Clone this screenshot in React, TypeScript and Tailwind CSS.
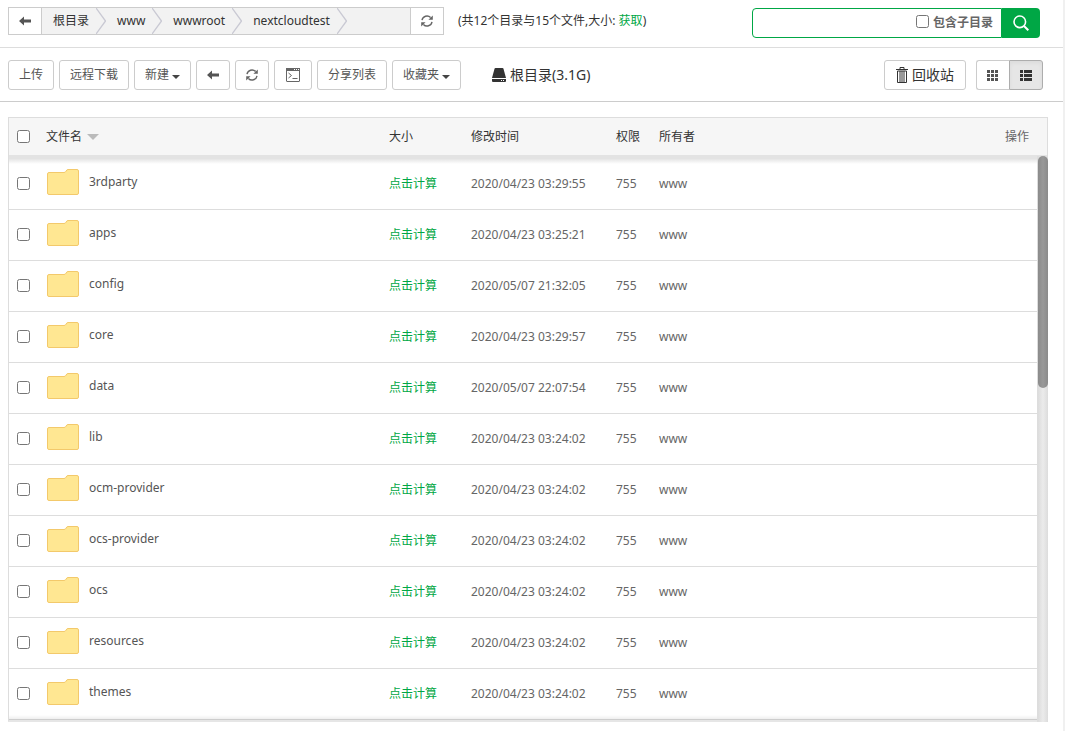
import { useState } from "react";
import type { ReactNode } from "react";

interface IFolder {
    name: string;
    modified: string;
}

const crumbs = ["根目录", "www", "wwwroot", "nextcloudtest"];

const folders: IFolder[] = [
    { name: "3rdparty", modified: "2020/04/23 03:29:55" },
    { name: "apps", modified: "2020/04/23 03:25:21" },
    { name: "config", modified: "2020/05/07 21:32:05" },
    { name: "core", modified: "2020/04/23 03:29:57" },
    { name: "data", modified: "2020/05/07 22:07:54" },
    { name: "lib", modified: "2020/04/23 03:24:02" },
    { name: "ocm-provider", modified: "2020/04/23 03:24:02" },
    { name: "ocs-provider", modified: "2020/04/23 03:24:02" },
    { name: "ocs", modified: "2020/04/23 03:24:02" },
    { name: "resources", modified: "2020/04/23 03:24:02" },
    { name: "themes", modified: "2020/04/23 03:24:02" },
];

const ArrowLeftIcon = () => (
    <svg width="12" height="10" viewBox="0 0 12 10" fill="#555" aria-hidden="true">
        <path d="M0 5 5 .5V3.5H12V6.5H5V9.5Z" />
    </svg>
);

const RefreshIcon = () => (
    <svg width="12" height="12" viewBox="0 0 12 12" fill="none" stroke="#666" strokeWidth="1.4" aria-hidden="true">
        <path d="M1 5.2A5 5 0 0 1 9.6 2.6M11 6.8A5 5 0 0 1 2.4 9.4" />
        <path d="M11.8 .4V4.8H7.4ZM.2 11.6V7.2H4.6Z" fill="#666" stroke="none" />
    </svg>
);

const ConsoleIcon = () => (
    <svg width="14" height="14" viewBox="0 0 14 14" fill="none" stroke="#666" aria-hidden="true">
        <rect x=".5" y=".5" width="13" height="13" rx=".5" />
        <path d="M0 1.5H14" strokeWidth="3" />
        <path d="M8 1.5H9M10 1.5H11M12 1.5H13" stroke="#fff" />
        <path d="M2.5 5 5.5 7.5 2.5 10M6.5 10.5H11.5" />
    </svg>
);

const DiskIcon = () => (
    <svg width="14" height="14" viewBox="0 0 14 14" fill="#333" aria-hidden="true">
        <path d="M2.6 .6Q2.8 0 3.5 0H10.5Q11.2 0 11.4 .6L14 10H0Z" />
        <path d="M0 11H14V13Q14 14 13 14H1Q0 14 0 13Z" />
        <path d="M9 12.5H10M11 12.5H12" stroke="#fff" />
    </svg>
);

const SearchIcon = () => (
    <svg width="16" height="16" viewBox="0 0 16 16" fill="none" stroke="#fff" strokeWidth="1.6" aria-hidden="true">
        <circle cx="6.8" cy="6.8" r="5.8" />
        <path d="M11 11 15.3 15.3" strokeWidth="2" />
    </svg>
);

const TrashIcon = () => (
    <svg width="12" height="16" viewBox="0 0 12 16" fill="none" stroke="#333" aria-hidden="true">
        <path d="M4 2V.5H8V2" />
        <path d="M0 2.5H12" />
        <path d="M1.5 4V15.5H10.5V4Z" />
        <path d="M4 4V15M6 4V15M8 4V15" />
    </svg>
);

const GridIcon = () => (
    <svg width="12" height="11" viewBox="0 0 12 11" fill="#555" aria-hidden="true">
        <path d="M0 0H3V3H0ZM4 0H7V3H4ZM8 0H11V3H8ZM0 4H3V7H0ZM4 4H7V7H4ZM8 4H11V7H8ZM0 8H3V11H0ZM4 8H7V11H4ZM8 8H11V11H8Z" />
    </svg>
);

const ListIcon = () => (
    <svg width="12" height="11" viewBox="0 0 12 11" fill="#333" aria-hidden="true">
        <path d="M0 0H3V3H0ZM4 0H12V3H4ZM0 4H3V7H0ZM4 4H12V7H4ZM0 8H3V11H0ZM4 8H12V11H4Z" />
    </svg>
);

const CaretIcon = () => (
    <svg className="mt-1" width="8" height="4" viewBox="0 0 8 4" fill="#444" aria-hidden="true">
        <path d="M0 0H8L4 4Z" />
    </svg>
);

const FolderIcon = () => (
    <svg className="shrink-0" width="32" height="26" viewBox="0 0 32 26" fill="#ffe792" stroke="#f3c96b" aria-hidden="true">
        <path d="M2 3.5H17Q18.4 3.5 19 2.2Q19.7 .5 21 .5H30Q31.5 .5 31.5 2V24Q31.5 25.5 30 25.5H2Q.5 25.5 .5 24V5Q.5 3.5 2 3.5Z" />
    </svg>
);

const CrumbArrow = () => (
    <svg width="10" height="26" viewBox="0 0 10 26" fill="none" stroke="#c9c9d3" strokeWidth="1.3" aria-hidden="true">
        <path d="M0 0 9.5 13 0 26" />
    </svg>
);

interface ToolButtonProps {
    children: ReactNode;
    label?: string;
}

const ToolButton = ({ children, label }: ToolButtonProps) => (
    <button
        aria-label={label}
        className="flex h-[30px] items-center gap-[3px] rounded-[3px] border border-[#ccc] bg-white px-[10px] text-[#555] hover:bg-gray-100"
    >
        {children}
    </button>
);

const PathBar = () => (
    <div className="flex items-start justify-between border-b border-[#ddd] pr-[23px] pb-[9px] pl-2">
        <div className="flex items-center pt-[7px]">
            <nav className="flex h-7 w-[436px] border border-[#ccc] bg-[#f2f2f2]" aria-label="路径">
                <button className="flex w-[33px] items-center justify-center border-r border-[#ccc] bg-white" aria-label="返回">
                    <ArrowLeftIcon />
                </button>
                {crumbs.map((crumb) => (
                    <div key={crumb} className="flex items-center">
                        <a href="#" className="pr-[7px] pl-[11px] text-[#333]">
                            {crumb}
                        </a>
                        <CrumbArrow />
                    </div>
                ))}
                <button className="ml-auto flex w-[33px] items-center justify-center border-l border-[#ccc] bg-white" aria-label="刷新">
                    <RefreshIcon />
                </button>
            </nav>
            <p className="ml-[14px] text-[#333]">
                (共12个目录与15个文件,大小: <a href="#" className="text-[#00a745]">获取</a>)
            </p>
        </div>
        <form className="flex pt-2" onSubmit={(e) => e.preventDefault()}>
            <div className="flex h-[30px] w-[250px] items-center rounded-l-sm border border-[#00a745] pr-2">
                <input type="text" aria-label="搜索" className="h-full min-w-0 flex-1 px-2 outline-none" />
                <label className="flex items-start gap-1 font-semibold text-[#666]">
                    <input type="checkbox" className="size-[13px]" />
                    包含子目录
                </label>
            </div>
            <button className="flex h-[30px] w-[38px] items-center justify-center rounded-r-sm bg-[#00a745]" aria-label="搜索文件">
                <SearchIcon />
            </button>
        </form>
    </div>
);

const Toolbar = () => (
    <div className="flex items-center justify-between border-b border-[#ccc] pt-3 pr-5 pb-[11px] pl-2">
        <div className="flex items-center gap-[5px]">
            <ToolButton>上传</ToolButton>
            <ToolButton>远程下载</ToolButton>
            <ToolButton>
                新建 <CaretIcon />
            </ToolButton>
            <ToolButton label="后退"><ArrowLeftIcon /></ToolButton>
            <ToolButton label="刷新列表"><RefreshIcon /></ToolButton>
            <ToolButton label="终端">
                <span className="px-px"><ConsoleIcon /></span>
            </ToolButton>
            <ToolButton>分享列表</ToolButton>
            <ToolButton>
                收藏夹 <CaretIcon />
            </ToolButton>
            <button className="ml-[26px] flex items-center gap-1 text-sm text-[#333]">
                <DiskIcon />
                根目录(3.1G)
            </button>
        </div>
        <div className="flex items-center gap-[10px]">
            <button className="flex h-[30px] w-[82px] items-center justify-center gap-1 rounded-[3px] border border-[#ccc] bg-white text-sm text-[#333]">
                <TrashIcon />
                回收站
            </button>
            <div className="flex">
                <button className="flex h-[30px] w-[33px] items-center justify-center rounded-l-[3px] border border-r-0 border-[#ccc] bg-white" aria-label="网格视图">
                    <GridIcon />
                </button>
                <button className="flex h-[30px] w-[34px] items-center justify-center rounded-r-[3px] border border-[#adadad] bg-[#e6e6e6] inset-shadow-sm" aria-label="列表视图">
                    <ListIcon />
                </button>
            </div>
        </div>
    </div>
);

const FileTable = () => {
    const [selected, setSelected] = useState<string[]>([]);

    const toggle = (name: string) => {
        setSelected(selected.includes(name) ? selected.filter((n) => n !== name) : [...selected, name]);
    };

    return (
        <div className="relative mt-[15px] mr-[15px] ml-2 border border-b-2 border-[#ddd] border-b-[#e6e6e6]">
            <table className="w-full table-fixed border-separate border-spacing-0 text-left text-[#666]">
                <thead>
                    <tr className="h-[41px] text-[#333] *:border-b-4 *:border-[#e3e3e3] *:bg-[#f6f6f6] *:font-normal">
                        <th className="w-[37px] pl-2">
                            <input
                                type="checkbox"
                                aria-label="全选"
                                className="block size-[13px]"
                                checked={selected.length === folders.length}
                                onChange={(e) => setSelected(e.target.checked ? folders.map((f) => f.name) : [])}
                            />
                        </th>
                        <th className="w-[343px]">
                            <button className="flex items-center gap-[5px]">
                                文件名
                                <svg width="12" height="6" viewBox="0 0 12 6" fill="#bbb" aria-hidden="true">
                                    <path d="M0 0H12L6 6Z" />
                                </svg>
                            </button>
                        </th>
                        <th className="w-[82px]">大小</th>
                        <th className="w-[145px]">修改时间</th>
                        <th className="w-[43px]">权限</th>
                        <th>所有者</th>
                        <th className="w-20 pr-[18px] text-right text-[#666]">操作</th>
                    </tr>
                </thead>
                <tbody>
                    {folders.map((folder) => (
                        <tr key={folder.name} className="h-[51px] *:border-b *:border-[#ddd]">
                            <td className="pb-0.5 pl-2">
                                <input
                                    type="checkbox"
                                    aria-label={folder.name}
                                    className="block size-[13px]"
                                    checked={selected.includes(folder.name)}
                                    onChange={() => toggle(folder.name)}
                                />
                            </td>
                            <td className="pb-1 pl-px">
                                <a href="#" className="flex items-center gap-[10px] text-[#555]">
                                    <FolderIcon />
                                    {folder.name}
                                </a>
                            </td>
                            <td><a href="#" className="text-[#00a745]">点击计算</a></td>
                            <td>{folder.modified}</td>
                            <td>755</td>
                            <td>www</td>
                            <td></td>
                        </tr>
                    ))}
                </tbody>
            </table>
            {/* shading under the fixed header and above the bottom edge */}
            <div className="pointer-events-none absolute inset-x-0 top-[41px] h-[5px] bg-linear-to-b from-black/10 to-transparent" />
            <div className="pointer-events-none absolute inset-x-0 bottom-0 h-[5px] bg-linear-to-t from-black/8 to-transparent" />
            {/* scrollbar laid over the list */}
            <div className="absolute top-[38px] -right-px -bottom-0.5 w-[11px] border-l border-[#ddd] bg-linear-to-r from-[#dcdcdc] via-[#ebebeb] to-[#dcdcdc]">
                <div className="h-[232px] rounded-full bg-linear-to-r from-[#8b8b8b] via-[#999] to-[#8b8b8b]" />
            </div>
        </div>
    );
};

const App = () => {
    return (
        <div className="min-h-screen border-r-2 border-[#f0f0f0] bg-white font-['Noto_Sans','Noto_Sans_CJK_SC',sans-serif] text-xs">
            <PathBar />
            <Toolbar />
            <FileTable />
        </div>
    );
};

export default App;
